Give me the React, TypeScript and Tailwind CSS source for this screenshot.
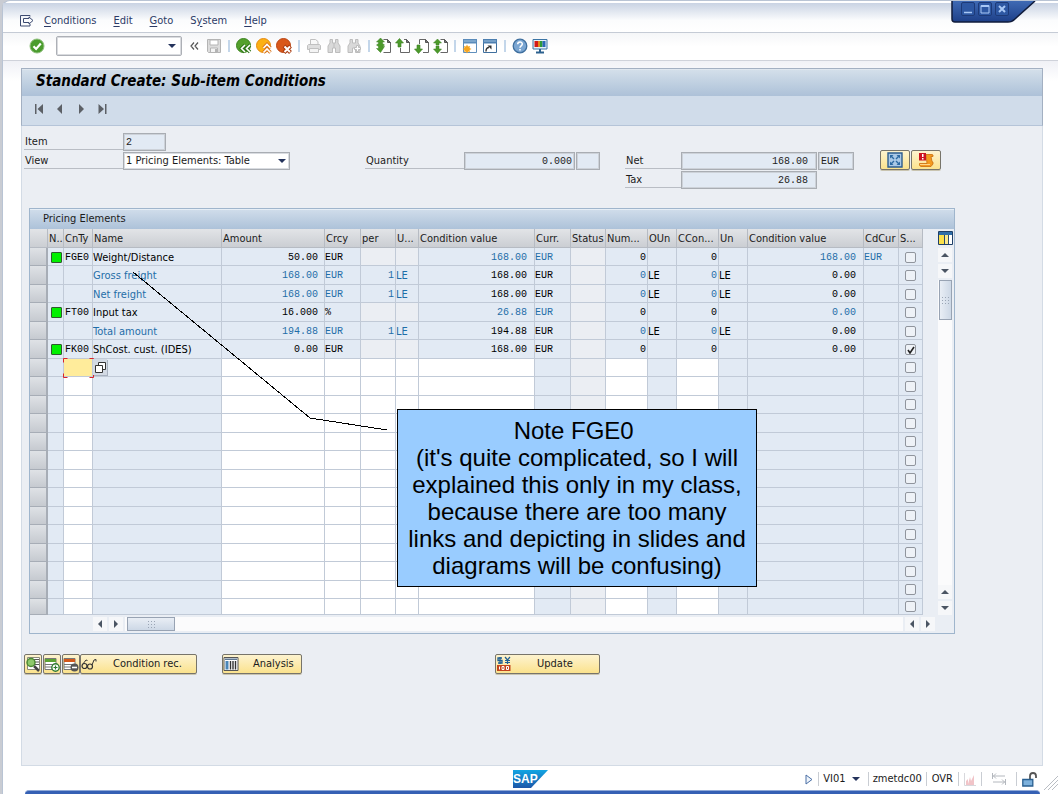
import React from "react";

const UI = "font-['DejaVu_Sans_Condensed','DejaVu_Sans',sans-serif]";
const MONO = "font-['Liberation_Mono',monospace]";

/* ---------- toolbar icons ---------- */

function Svg({ children, size = 16 }: { children: React.ReactNode; size?: number }) {
  return (
    <svg width={size} height={size} viewBox="0 0 16 16" fill="none" aria-hidden="true">
      {children}
    </svg>
  );
}

const PAGE = "M5.5 2.5H12L14.5 5V14.5H5.5";

const icons = {
  enter: (
    <Svg>
      <circle cx="8" cy="8" r="7" fill="#4a9c2d" stroke="#8fbf7c" />
      <path d="M4.5 8.2l2.6 2.7 4.7-5.4" stroke="#fff" strokeWidth="2.2" />
    </Svg>
  ),
  save: (
    <Svg>
      <path d="M1.5 1.5h13v13h-12l-1-1z" fill="#dcdcdc" stroke="#b4b4b4" />
      <path d="M4 2h8v5H4z" fill="#fff" stroke="#b4b4b4" />
      <path d="M4.5 10h7v4.5h-7z" fill="#f4f4f4" stroke="#b4b4b4" />
      <path d="M9 11h2v3H9z" fill="#b4b4b4" />
    </Svg>
  ),
  back: (
    <Svg>
      <circle cx="7.5" cy="7.5" r="7" fill="#54a02c" stroke="#3c8420" />
      <path d="M9 7l-3.500 3.500L9 14M14 7l-3.500 3.500L14 14" stroke="#2f7518" strokeWidth="3.400" />
      <path d="M9 7l-3.500 3.500L9 14M14 7l-3.500 3.500L14 14" stroke="#fff" strokeWidth="1.600" />
    </Svg>
  ),
  exit: (
    <Svg>
      <circle cx="7.5" cy="7.5" r="7" fill="#fbb015" stroke="#e68a10" />
      <path d="M7.500 10L11 6.500l3.500 3.500M7.500 14.500L11 11l3.500 3.500" stroke="#d9741a" strokeWidth="3.400" />
      <path d="M7.500 10L11 6.500l3.500 3.500M7.500 14.500L11 11l3.500 3.500" stroke="#fff" strokeWidth="1.600" />
    </Svg>
  ),
  cancel: (
    <Svg>
      <circle cx="7.5" cy="7.5" r="7" fill="#d9581a" stroke="#b94412" />
      <path d="M8 8l6.500 6.500M14.500 8L8 14.500" stroke="#a93a0e" strokeWidth="4" />
      <path d="M8.500 8.500l5.500 5.500M14 8.500L8.500 14" stroke="#fff" strokeWidth="2" />
    </Svg>
  ),
  print: (
    <Svg>
      <path d="M4.500 6.500v-5h5l2.500 2v3" fill="#f8f8f8" stroke="#c0c0c0" />
      <path d="M1.500 7.500l1-1h11l1 1v4h-13z" fill="#dedede" stroke="#c0c0c0" />
      <path d="M3.500 10.500h9v4h-9z" fill="#f4f4f4" stroke="#c0c0c0" />
    </Svg>
  ),
  find: (
    <Svg>
      <path d="M4 1.500h2.500V5h3V1.500H12V5l2 3v6.500H9.500V10h-3v4.500H2V8l2-3z" fill="#d9d9d9" stroke="#bdbdbd" />
      <path d="M8 5v5" stroke="#bdbdbd" />
    </Svg>
  ),
  findNext: (
    <Svg>
      <path d="M4 1.500h2.500V5h3V1.500H12V5l2 3v6.500H9.500V10h-3v4.500H2V8l2-3z" fill="#d9d9d9" stroke="#bdbdbd" />
      <path d="M10.500 7.500h2v2h2v2h-2v2h-2v-2h-2v-2h2z" fill="#fff" stroke="#bdbdbd" />
    </Svg>
  ),
  first: (
    <Svg>
      <path d="M7.500 1.500h4L14.500 4.500v10h-7" fill="#fff" stroke="#666" />
      <path d="M11.500 1.500v3h3z" fill="#777" stroke="#555" />
      <path d="M4.500 0l4 4H6.500v1.500l2 1.500-2 1.500h2l-4 6-4-4h2V8.500L.5 7l2-1.500V4h-2z" fill="#4c9a2b" stroke="#3a7f20" strokeWidth=".5" />
    </Svg>
  ),
  prev: (
    <Svg>
      <path d="M9 1.500h2.500l3 3v10h-9V10" fill="#fff" stroke="#666" />
      <path d="M11.500 1.500v3h3z" fill="#777" stroke="#555" />
      <path d="M4.500.5l4 4.500H6v4H3V5H.5z" fill="#4c9a2b" stroke="#3a7f20" strokeWidth=".6" />
    </Svg>
  ),
  next: (
    <Svg>
      <path d="M5.500 6V1.500h6l3 3v10H9" fill="#fff" stroke="#666" />
      <path d="M11.500 1.500v3h3z" fill="#777" stroke="#555" />
      <path d="M4.500 15.500l4-4.500H6V7H3v4H.5z" fill="#4c9a2b" stroke="#3a7f20" strokeWidth=".6" />
    </Svg>
  ),
  last: (
    <Svg>
      <path d="M7.500 1.500h4L14.500 4.500v10h-7" fill="#fff" stroke="#666" />
      <path d="M11.500 1.500v3h3z" fill="#777" stroke="#555" />
      <path d="M4.500 1l4 4H6v2H3V5H.5z" fill="#4c9a2b" stroke="#3a7f20" strokeWidth=".5" />
      <path d="M3 8h3v3h2.500l-4 4.500-4-4.500H3z" fill="#4c9a2b" stroke="#3a7f20" strokeWidth=".5" />
    </Svg>
  ),
  newSession: (
    <Svg>
      <path d="M1.500 1.500h13v13h-13z" fill="#fff" stroke="#5f8fbd" />
      <path d="M1 1h14v4.500H1z" fill="#5b8cbb" />
      <path d="M2 3h12" stroke="#9fc1df" />
      <path d="M5 6.500l1 2 2-.5-.5 2 2 1-2 1 .5 2-2-.5-1 2-1-2-2 .5.500-2-2-1 2-1-.5-2 2 .5z" fill="#f7a51c" />
    </Svg>
  ),
  shortcut: (
    <Svg>
      <path d="M1.500 1.500h13v13h-13z" fill="#fff" stroke="#3f6f9e" />
      <path d="M1 1h14v4.500H1z" fill="#4d7fb0" />
      <path d="M2 3h12" stroke="#9fc1df" />
      <path d="M4 13.500c0-3 1-4 3-4" stroke="#333" strokeWidth="1.400" />
      <path d="M5.500 7.500h4v4z" fill="#333" />
    </Svg>
  ),
  help: (
    <Svg>
      <circle cx="8" cy="8" r="6.800" fill="#7ba6d2" stroke="#3f6f9e" strokeWidth="1.300" />
      <path d="M5.700 6.300c0-3 4.600-3 4.600-.2 0 1.800-2.300 1.800-2.300 3.600" stroke="#fff" strokeWidth="1.500" />
      <path d="M7.200 11h1.600v1.600H7.200z" fill="#fff" />
    </Svg>
  ),
  layout: (
    <Svg>
      <path d="M1 1.500h14v9.500H1z" fill="#e8f1f8" stroke="#3b74a5" />
      <path d="M2.500 3H6v6H2.500z" fill="#d41818" />
      <path d="M6 3h2.500v6H6z" fill="#e08a1c" />
      <path d="M8 3h2.500v6H8z" fill="#2d9b3a" />
      <path d="M10.500 3h3v6h-3z" fill="#2b68b8" />
      <path d="M8 11v3M4 14.500h8" stroke="#2d628f" strokeWidth="2" />
    </Svg>
  ),
};

function ToolButton({ label, icon, narrow = false }: { label: string; icon: React.ReactNode; narrow?: boolean }) {
  return (
    <button aria-label={label} className={`flex h-5 items-center justify-center ${narrow ? "w-[19px]" : "w-5"}`}>
      {icon}
    </button>
  );
}

function Sep() {
  return <span className="mx-1 h-3 w-0.5 shrink-0 bg-[#c3d6ea]" />;
}

type Dir = "up" | "down" | "left" | "right";

const ARROWS: Record<Dir, string> = {
  up: "M0 6L4 2l4 4z",
  down: "M0 2h8L4 6z",
  left: "M6 0v8L2 4z",
  right: "M2 0l4 4-4 4z",
};

function Arrow({ dir, className = "fill-[#4b5563]" }: { dir: Dir; className?: string }) {
  return (
    <svg width="8" height="8" viewBox="0 0 8 8" aria-hidden="true" className={className}>
      <path d={ARROWS[dir]} />
    </svg>
  );
}

/* ---------- window chrome ---------- */

function WindowControls() {
  return (
    <div className="absolute top-0 right-[20px] h-6 w-[90px]">
      <svg width="90" height="24" viewBox="0 0 90 24" aria-hidden="true" className="absolute inset-0">
        <defs>
          <linearGradient id="cap" x1="0" y1="0" x2="0" y2="1">
            <stop offset="0" stopColor="#3f6ab4" />
            <stop offset="1" stopColor="#1d3f88" />
          </linearGradient>
        </defs>
        <path d="M4 0v18q0 3 3 3h53q4 0 7-3L87 0z" fill="url(#cap)" />
        <path d="M4 0v18q0 3 3 3h53q4 0 7-3L87 0" fill="none" stroke="#101c3c" strokeWidth="1.500" />
      </svg>
      <div className="absolute top-px left-[13px] flex gap-[3px]">
        {["Minimize", "Maximize", "Close"].map((name, i) => (
          <button
            key={name}
            aria-label={name}
            className="flex h-3.5 w-3.5 items-center justify-center rounded-xs border border-[#1d3a78] bg-[#2d57a2]"
          >
            <svg width="10" height="10" viewBox="0 0 10 10" fill="none" stroke="#a9c8f5" aria-hidden="true">
              {i === 0 && <path d="M1 8.500h8" strokeWidth="1.500" />}
              {i === 1 && <path d="M1 1.500h8v7.500H1zM1 2.500h8" />}
              {i === 2 && <path d="M2 2l6 6M8 2L2 8" strokeWidth="2" />}
            </svg>
          </button>
        ))}
      </div>
    </div>
  );
}

const MENUS = ["Conditions", "Edit", "Goto", "System", "Help"];
const MENU_KEY = [0, 0, 0, 1, 0];

function MenuBar() {
  return (
    <nav className="flex h-[30px] items-center gap-[17px] border-b border-[#c5cbd5] bg-linear-to-b from-[#c9d3e3] via-[#fbfcfd] via-60% to-white pt-[7px] pl-[17px] text-[11px] text-[#2b3a66]">
      <svg width="14" height="12" viewBox="0 0 14 12" fill="none" stroke="#3c4a70" aria-hidden="true" className="-mr-[7px]">
        <path d="M10 1.500V.5H.5v10.500H10V9M3.500 3.500H9V2l4 3.500L9 9V7.500H3.500z" />
      </svg>
      {MENUS.map((m, i) => (
        <button key={m}>
          {m.slice(0, MENU_KEY[i])}
          <span className="underline underline-offset-2">{m[MENU_KEY[i]]}</span>
          {m.slice(MENU_KEY[i] + 1)}
        </button>
      ))}
    </nav>
  );
}

function StandardToolbar() {
  return (
    <div className="flex h-[28px] items-center border-b border-[#cfd2da] bg-linear-to-b from-[#f5f6f8] to-white to-50% pb-px pl-[26px]">
      <button aria-label="Enter" className="mr-[11px]">
        {icons.enter}
      </button>
      <div className="relative mr-0.5 flex w-[126px] items-center">
        <input
          aria-label="Command"
          className="h-5 w-full rounded-xs border border-[#adb0b6] bg-white pr-4 pl-1 text-[11px] shadow-[inset_0_0_0_1px_#d9dbdf]"
        />
        <span className="pointer-events-none absolute right-1.5">
          <Arrow dir="down" className="fill-[#24335c]" />
        </span>
      </div>
      <button aria-label="Hide command field" className="flex w-5 justify-center">
        <svg width="9" height="8" viewBox="0 0 9 8" fill="none" stroke="#555" strokeWidth="1.200" aria-hidden="true">
          <path d="M4 .5L1 4l3 3.500M8 .5L5 4l3 3.500" />
        </svg>
      </button>
      <ToolButton label="Save" icon={icons.save} />
      <Sep />
      <ToolButton label="Back" icon={icons.back} />
      <ToolButton label="Exit" icon={icons.exit} />
      <ToolButton label="Cancel" icon={icons.cancel} />
      <Sep />
      <ToolButton label="Print" icon={icons.print} />
      <ToolButton label="Find" icon={icons.find} />
      <ToolButton label="Find next" icon={icons.findNext} />
      <Sep />
      <ToolButton narrow label="First page" icon={icons.first} />
      <ToolButton narrow label="Previous page" icon={icons.prev} />
      <ToolButton narrow label="Next page" icon={icons.next} />
      <ToolButton narrow label="Last page" icon={icons.last} />
      <Sep />
      <ToolButton label="Create session" icon={icons.newSession} />
      <ToolButton label="Create shortcut" icon={icons.shortcut} />
      <Sep />
      <ToolButton label="Help" icon={icons.help} />
      <ToolButton label="Customize layout" icon={icons.layout} />
    </div>
  );
}

function TitleArea() {
  return (
    <header className="border border-[#a3b0c2] border-b-[#b5c4d8]">
      <h1 className="flex h-[27px] items-center border-t border-white/60 bg-linear-to-b from-[#d3dfea] to-[#adc1d8] pb-1 pl-3.5 text-[15px] leading-5 font-bold text-black italic">
        Standard Create: Sub-item Conditions
      </h1>
      <div className="flex h-[29px] items-center gap-2 bg-[#d0dcea] pb-1 pl-2.5">
        {["First item", "Previous item", "Next item", "Last item"].map((name, i) => (
          <button key={name} aria-label={name} className="flex w-[13px] justify-center">
            <svg width="10" height="10" viewBox="0 0 10 10" fill="#5c6066" aria-hidden="true">
              {i === 0 && <path d="M1 0h1.500v10H1zM9 0v10L3.500 5z" />}
              {i === 1 && <path d="M7 0v10L2 5z" />}
              {i === 2 && <path d="M3 0l5 5-5 5z" />}
              {i === 3 && <path d="M8 0h1.500v10H8zM1.500 0L7 5l-5.500 5z" />}
            </svg>
          </button>
        ))}
      </div>
    </header>
  );
}

/* ---------- header form ---------- */

const FIELD =
  "h-[18px] border border-[#a9adb3] bg-[#e2eaf4] px-0.5 text-[10px] leading-4 text-[#222] shadow-[inset_0_0_0_1px_#cdd2d9]";
const LABEL = "flex h-[17px] items-center border-b border-[#b9bdc4] pt-0.5 pl-px text-[11px]";

const PUSH =
  "flex h-5 items-center rounded-xs border border-[#77746a] bg-linear-to-b from-[#fdf3cf] to-[#fbe28c] shadow-[0_1px_0_#c9c4b0]";

function HeaderForm() {
  return (
    <form className="flex items-start pt-[7px] pl-0.5" onSubmit={(e) => e.preventDefault()}>
      <div className="mr-[75px] flex w-[266px] flex-col gap-px">
        <div className="flex items-start">
          <label htmlFor="item" className={`${LABEL} w-[99px]`}>
            Item
          </label>
          <input id="item" readOnly value="2" className={`${FIELD} ${MONO} w-[43px]`} />
        </div>
        <div className="relative flex items-start">
          <label htmlFor="view" className={`${LABEL} w-[99px]`}>
            View
          </label>
          <select
            id="view"
            className="h-[18px] flex-1 appearance-none border border-[#a9adb3] bg-white px-0.5 text-[11px] leading-4 shadow-[inset_0_0_0_1px_#d9dce1]"
          >
            <option>1 Pricing Elements: Table</option>
          </select>
          <span className="pointer-events-none absolute top-[5px] right-[4px]">
            <Arrow dir="down" className="fill-[#24335c]" />
          </span>
        </div>
      </div>
      <div className="mr-[25px] flex w-[235px] items-start pt-[19px]">
        <label htmlFor="qty" className={`${LABEL} w-[99px]`}>
          Quantity
        </label>
        <input id="qty" readOnly value="0.000" className={`${FIELD} ${MONO} mr-px w-[111px] text-right`} />
        <input aria-label="Quantity unit" readOnly value="" className={`${FIELD} w-6`} />
      </div>
      <div className="mr-[26px] flex w-[229px] flex-col gap-px pt-[19px]">
        <div className="flex items-start">
          <label htmlFor="net" className={`${LABEL} w-14`}>
            Net
          </label>
          <input id="net" readOnly value="168.00" className={`${FIELD} ${MONO} mr-px w-[136px] pr-2 text-right`} />
          <input aria-label="Currency" readOnly value="EUR" className={`${FIELD} ${MONO} w-9`} />
        </div>
        <div className="flex items-start">
          <label htmlFor="tax" className={`${LABEL} w-14`}>
            Tax
          </label>
          <input id="tax" readOnly value="26.88" className={`${FIELD} ${MONO} w-[136px] pr-2 text-right`} />
        </div>
      </div>
      <div className="flex gap-px pt-[17px]">
        <button aria-label="Expand all" className={`${PUSH} w-[30px] justify-center`}>
          <Svg>
            <path d="M1 1h14v14H1z" fill="#a9c8e6" stroke="#2d5c8e" strokeWidth="1.400" />
            <path d="M3 6.500V3h3.500zM9.500 3H13v3.500zM13 9.500V13H9.500zM6.500 13H3V9.500z" fill="#2d6aa3" />
            <path d="M4 4l3 3M12 4L9 7M12 12L9 9M4 12l3-3" stroke="#2d6aa3" strokeWidth="1.400" />
          </Svg>
        </button>
        <button aria-label="Incompletion log" className={`${PUSH} w-[30px] justify-center`}>
          <Svg>
            <path
              d="M8 2.500h6q1.500 0 1 2h-2l1 5q1.500 0 1 2.500l-2 2.500H3q-2-.5-1.500-3H9z"
              fill="#f39a1e"
              stroke="#c96c0c"
              strokeWidth=".8"
            />
            <path d="M2 12.500h10" stroke="#ffd58a" />
            <path d="M1 1h7v7.500H1z" fill="#cc1420" />
            <path d="M4 2h1.500v3H4zM4 6h1.500v1.500H4z" fill="#fff" />
          </Svg>
        </button>
      </div>
    </form>
  );
}

/* ---------- pricing table ---------- */

type Kind = "text" | "num" | "code";
type Column = { head: string; width: string; kind: Kind; pad: string; empty: string };

const BLUE = "bg-[#e2eaf4]";
const GRAY = "bg-[#ebeef3]";
const WHITE = "bg-white";

const COLUMNS: Column[] = [
  { head: "N..", width: "w-4", kind: "text", pad: "pl-[3px]", empty: BLUE },
  { head: "CnTy", width: "w-[29px]", kind: "code", pad: "pl-px", empty: WHITE },
  { head: "Name", width: "w-[129px]", kind: "text", pad: "", empty: BLUE },
  { head: "Amount", width: "w-[103px]", kind: "num", pad: "pr-[6px]", empty: WHITE },
  { head: "Crcy", width: "w-9", kind: "code", pad: "", empty: WHITE },
  { head: "per", width: "w-[35px]", kind: "num", pad: "pr-px", empty: WHITE },
  { head: "U...", width: "w-[23px]", kind: "text", pad: "", empty: WHITE },
  { head: "Condition value", width: "w-[116px]", kind: "num", pad: "pr-[7px]", empty: WHITE },
  { head: "Curr.", width: "w-9", kind: "code", pad: "", empty: BLUE },
  { head: "Status", width: "w-[35px]", kind: "text", pad: "", empty: GRAY },
  { head: "Num...", width: "w-[42px]", kind: "num", pad: "pr-px", empty: WHITE },
  { head: "OUn", width: "w-[29px]", kind: "text", pad: "", empty: BLUE },
  { head: "CCon...", width: "w-[42px]", kind: "num", pad: "pr-px", empty: WHITE },
  { head: "Un", width: "w-[29px]", kind: "text", pad: "", empty: BLUE },
  { head: "Condition value", width: "w-[116px]", kind: "num", pad: "pr-[7px]", empty: BLUE },
  { head: "CdCur", width: "w-[35px]", kind: "code", pad: "", empty: BLUE },
  { head: "S...", width: "w-6", kind: "text", pad: "", empty: BLUE },
];

/* A leading "*" marks a calculated value, shown in blue. */
const ROWS: string[][] = [
  ["", "FGE0", "Weight/Distance", "50.00", "EUR", "", "", "*168.00", "*EUR", "", "0", "", "0", "", "*168.00", "*EUR"],
  ["", "", "*Gross freight", "*168.00", "*EUR", "*1", "*LE", "168.00", "EUR", "", "*0", "LE", "*0", "LE", "0.00", ""],
  ["", "", "*Net freight", "*168.00", "*EUR", "*1", "*LE", "168.00", "EUR", "", "*0", "LE", "*0", "LE", "0.00", ""],
  ["", "FT00", "Input tax", "16.000", "%", "", "", "*26.88", "*EUR", "", "0", "", "0", "", "*0.00", ""],
  ["", "", "*Total amount", "*194.88", "*EUR", "*1", "*LE", "194.88", "EUR", "", "*0", "LE", "*0", "LE", "0.00", ""],
  ["", "FK00", "ShCost. cust. (IDES)", "0.00", "EUR", "", "", "168.00", "EUR", "", "0", "", "0", "", "0.00", ""],
];
const ROW_COUNT = 20;
const ACTIVE_ROW = 6;

const GRID = "border-r border-b border-[#c1cad7]";
const HEAD = "border-r border-b border-[#b6bbc3] bg-linear-to-b from-[#e2e4e7] to-[#cbced3]";

function Check({ row }: { row: number }) {
  return (
    <span className="relative flex justify-center">
      <input
        type="checkbox"
        aria-label={`Statistical, row ${row + 1}`}
        defaultChecked={row === 5}
        className="peer h-[11px] w-[11px] appearance-none rounded-xs border border-[#90959d] bg-[#eef2f7]"
      />
      <svg
        viewBox="0 0 8 8"
        fill="none"
        stroke="#222"
        strokeWidth="1.600"
        aria-hidden="true"
        className="pointer-events-none invisible absolute top-0.5 h-2 w-2 peer-checked:visible"
      >
        <path d="M1 4l2 3 4-6" />
      </svg>
    </span>
  );
}

function ActiveCell() {
  return (
    <td className={`relative p-0 ${GRID} bg-[#ffec9b]`}>
      <input aria-label="Condition type" className={`block h-4 w-full bg-transparent text-[10px] outline-none ${MONO}`} />
      <svg
        width="31"
        height="20"
        viewBox="0 0 31 20"
        fill="none"
        stroke="#d8232a"
        aria-hidden="true"
        className="pointer-events-none absolute -top-px -left-px"
      >
        <path d="M.5 4.500v-4h4M26.500.5h4v4M30.500 15.500v4h-4M4.500 19.500h-4v-4" />
      </svg>
      <button
        aria-label="Value help"
        className="absolute top-0 left-[29px] z-10 flex h-4 w-3.5 items-center justify-center bg-[#d3dae4] shadow-[1px_1px_0_#a9b2bf]"
      >
        <svg width="11" height="11" viewBox="0 0 11 11" fill="#fff" stroke="#333" aria-hidden="true">
          <path d="M3.500.5h7v7h-7z" />
          <path d="M.5 3.500h7v7h-7z" />
        </svg>
      </button>
    </td>
  );
}

function PricingTable() {
  return (
    <table className="w-[893px] shrink-0 table-fixed border-separate border-spacing-0">
      <thead>
        <tr className="h-[19px]">
          <th aria-label="Select all" className={`w-[18px] p-0 ${HEAD}`} />
          {COLUMNS.map((c, i) => (
            <th
              key={i}
              scope="col"
              className={`${c.width} overflow-hidden p-0 pt-0.5 pl-px text-left text-[11px] leading-4 font-normal whitespace-nowrap ${HEAD}`}
            >
              {c.head}
            </th>
          ))}
        </tr>
      </thead>
      <tbody>
        {Array.from({ length: ROW_COUNT }, (_, r) => {
          const row = ROWS[r];
          const height = r === ROW_COUNT - 1 ? "h-4" : r % 2 ? "h-[19px]" : "h-[18px]";
          return (
            <tr key={r} className={height}>
              <td className="border-r-2 border-b border-[#a7adb6] bg-linear-to-b from-[#dfe2e6] to-[#c6cad0] p-0" />
              {COLUMNS.map((c, i) => {
                if (i === 1 && r === ACTIVE_ROW) return <ActiveCell key={i} />;
                const raw = row?.[i] ?? "";
                const calc = raw.startsWith("*");
                const text = calc ? raw.slice(1) : raw;
                const unused = i === 9 || ((i === 5 || i === 6) && !text);
                const bg = row ? (unused ? GRAY : BLUE) : c.empty;
                return (
                  <td
                    key={i}
                    className={`p-0 whitespace-nowrap leading-[15px] ${row ? "pt-px" : ""} ${GRID} ${bg} ${c.pad} ${
                      c.kind === "text" ? "text-[11px]" : `text-[10px] ${MONO}`
                    } ${c.kind === "num" ? "text-right" : ""} ${calc ? "text-[#1f6ea8]" : "text-black"}`}
                  >
                    {i === 0 && row?.[1] ? (
                      <span className="block h-[11px] w-[11px] rounded-[1px] border border-[#2f5a2f] bg-[#00f000]" />
                    ) : i === 16 ? (
                      <Check row={r} />
                    ) : (
                      text
                    )}
                  </td>
                );
              })}
            </tr>
          );
        })}
      </tbody>
    </table>
  );
}

function ScrollButton({ dir }: { dir: Dir }) {
  return (
    <button aria-label={`Scroll ${dir}`} className="flex h-3.5 w-3.5 shrink-0 items-center justify-center bg-[#f6f7f9]">
      <Arrow dir={dir} />
    </button>
  );
}

function Grip() {
  return (
    <svg width="8" height="8" viewBox="0 0 8 8" stroke="#9aa5b5" strokeDasharray="1 2" aria-hidden="true">
      <path d="M1 1.500h7M1 4.500h7M1 7.500h7" />
    </svg>
  );
}

function PricingPanel() {
  return (
    <section className="mt-[19px] ml-[7px] w-[926px] border border-[#9fb5cc] bg-[#eaeef4]">
      <h2 className="flex h-5 items-center border-t border-[#e6eef6] bg-linear-to-b from-[#cfdcea] to-[#adc2d9] pl-[13px] text-[11px]">
        Pricing Elements
      </h2>
      <div className="flex">
        <PricingTable />
        <div className="ml-[15px] flex w-3.5 flex-col items-center">
          <button aria-label="Configure table" className="mt-0.5 mb-[3px]">
            <svg width="15" height="14" viewBox="0 0 15 14" aria-hidden="true">
              <path d="M.5.5h14v13H.5z" fill="#fff" stroke="#1f3f66" />
              <path d="M1 1h13v3H1z" fill="#2f6ea8" />
              <path d="M1 4h5v9H1z" fill="#fbe04a" />
              <path d="M6.500 4v9" stroke="#2a4a70" />
              <path d="M7 4h3v9H7z" fill="#fbe98a" />
              <path d="M10.500 4v9" stroke="#2a4a70" />
            </svg>
          </button>
          <ScrollButton dir="up" />
          <div className="h-0.5" />
          <ScrollButton dir="down" />
          <div className="mt-0.5 flex w-3.5 flex-1 flex-col items-center bg-[#fbfbfc]">
            <div className="flex h-10 w-[13px] items-center justify-center border border-[#98a3b3] bg-linear-to-r from-[#e9eef5] to-[#cdd8e6]">
              <Grip />
            </div>
          </div>
          <ScrollButton dir="up" />
          <div className="h-0.5" />
          <ScrollButton dir="down" />
        </div>
      </div>
      <div className="flex h-[18px] items-center gap-0.5 pr-[19px] pl-[63px]">
        <ScrollButton dir="left" />
        <ScrollButton dir="right" />
        <div className="flex h-3.5 flex-1 items-center bg-[#fbfbfc] pl-0.5">
          <div className="flex h-3.5 w-12 items-center justify-center border border-[#98a3b3] bg-linear-to-b from-[#e9eef5] to-[#cdd8e6]">
            <Grip />
          </div>
        </div>
        <ScrollButton dir="left" />
        <ScrollButton dir="right" />
      </div>
    </section>
  );
}

/* ---------- footer actions ---------- */

function Actions() {
  return (
    <div className="mt-5 flex items-center pl-0.5 text-[11px]">
      <button aria-label="Details" className={`${PUSH} mr-px w-[18px] justify-center`}>
        <Svg>
          <path d="M2.500 1.500h12v12h-12z" fill="#fff" stroke="#8a8a7a" />
          <path d="M9 3.500h5M9 6h5M9 8.500h5" stroke="#555" />
          <circle cx="6" cy="6.500" r="4" fill="#8ec96c" stroke="#4c8a34" strokeWidth="1.500" />
          <path d="M9 10l5 5" stroke="#444" strokeWidth="2.500" />
        </Svg>
      </button>
      <button aria-label="Insert row" className={`${PUSH} mr-px w-[18px] justify-center`}>
        <Svg>
          <path d="M1 2.500h11v11H1z" fill="#fff" stroke="#777" />
          <path d="M1 3h11v3H1z" fill="#5ba233" />
          <path d="M1 8.500h11M1 11h11" stroke="#777" />
          <circle cx="11.500" cy="11.500" r="3.700" fill="#fff" stroke="#2f7a2f" strokeWidth="1.400" />
          <path d="M11.500 9.500v4M9.500 11.500h4" stroke="#2f7a2f" strokeWidth="1.200" />
        </Svg>
      </button>
      <button aria-label="Delete row" className={`${PUSH} w-[18px] justify-center`}>
        <Svg>
          <path d="M1 2.500h11v11H1z" fill="#fff" stroke="#777" />
          <path d="M1 3h11v3H1z" fill="#d3581c" />
          <path d="M1 8.500h11M1 11h11" stroke="#777" />
          <circle cx="11.500" cy="11.500" r="4" fill="#555" />
          <path d="M9 11.500h5" stroke="#fff" strokeWidth="1.600" />
        </Svg>
      </button>
      <button className={`${PUSH} mr-[25px] w-[117px] gap-4`}>
        <Svg>
          <circle cx="3.500" cy="10" r="2.500" stroke="#333" strokeWidth="1.200" />
          <circle cx="9" cy="10.500" r="2.500" stroke="#333" strokeWidth="1.200" />
          <path d="M1.500 8.500L5 4l1.500.5M11 9l2-5 2-.5v2" stroke="#333" />
        </Svg>
        Condition rec.
      </button>
      <button className={`${PUSH} mr-[193px] w-20 gap-3.5`}>
        <Svg>
          <path d="M1 1.500h14v13H1z" fill="#fff" stroke="#555" />
          <path d="M2 2.500h12v1.500H2z" fill="#5f7892" />
          <path d="M2.500 5h3v8.500h-3z" fill="#4a86b8" />
          <path d="M7.500 5v8.500M10 5v8.500M12.500 5v8.500" stroke="#333" strokeWidth="1.400" />
        </Svg>
        Analysis
      </button>
      <button className={`${PUSH} w-[105px] gap-[25px]`}>
        <Svg>
          <path d="M6 2H2v2.500h4V7H2M4 1v7" stroke="#1f5f94" strokeWidth="1.300" />
          <path d="M9 1l2.500 3L14 1M11.500 4v4M9 4.500h5M9 6.500h5" stroke="#1f5f94" strokeWidth="1.200" />
          <path d="M1 9h13.500v6H1z" fill="#c3441c" />
          <path d="M3.500 10.500v3M6 10.500h2v3H6zM10.500 10.500h2v3h-2z" stroke="#fff" />
        </Svg>
        Update
      </button>
    </div>
  );
}

/* ---------- annotation ---------- */

function Callout() {
  return (
    <>
      <svg
        width="260"
        height="170"
        viewBox="0 0 260 170"
        fill="none"
        stroke="#000"
        shapeRendering="crispEdges"
        aria-hidden="true"
        className="pointer-events-none absolute top-[145px] left-[110px]"
      >
        <path d="M1 1l177 146 77 12" />
      </svg>
      <aside className="absolute top-[283px] left-[375px] h-[178px] w-[360px] border border-black bg-[#99ccff] pt-[7px] text-center font-['Liberation_Sans',sans-serif] text-[24px] leading-[27px] text-black">
        Note FGE0&nbsp;
        <br />
        (it's quite complicated, so I will
        <br />
        explained this only in my class,
        <br />
        because there are too many
        <br />
        links and depicting in slides and
        <br />
        diagrams will be confusing)
      </aside>
    </>
  );
}

/* ---------- status bar ---------- */

function Bar() {
  return <span className="h-3.5 w-px bg-[#c9cdd3]" />;
}

function StatusBar() {
  return (
    <footer className="relative flex h-6 items-center justify-end pt-0.5 pr-[21px] text-[11px]">
      <svg width="36" height="18" viewBox="0 0 36 18" role="img" aria-label="SAP" className="absolute top-1 left-[510px]">
        <defs>
          <linearGradient id="sap" x1="0" y1="0" x2="0" y2="1">
            <stop offset="0" stopColor="#12a5e3" />
            <stop offset="1" stopColor="#1c56a8" />
          </linearGradient>
        </defs>
        <path d="M0 0h35L18 18H0z" fill="url(#sap)" />
        <text x="0" y="13" fill="#fff" fontFamily="Liberation Sans" fontWeight="bold" fontSize="12">
          SAP
        </text>
      </svg>
      <button aria-label="Show messages" className="mr-[5px]">
        <svg width="8" height="11" viewBox="0 0 8 11" fill="#eef4fb" stroke="#4a6fa5" aria-hidden="true">
          <path d="M1 1l6 4.500L1 10z" />
        </svg>
      </button>
      <Bar />
      <button className="mr-2 ml-1 flex items-center gap-1.5">
        VI01
        <Arrow dir="down" className="fill-[#24335c]" />
      </button>
      <Bar />
      <span className="mx-1">zmetdc00</span>
      <Bar />
      <span className="mx-[5px]">OVR</span>
      <Bar />
      <svg width="14" height="13" viewBox="0 0 14 13" fill="none" aria-hidden="true" className="mx-1">
        <path d="M1.500 0v12.500H13" stroke="#d8d8dc" />
        <path d="M3 8l2-2v5l2-7 1 4 3-6v10H3z" fill="#f1c4c8" />
      </svg>
      <Bar />
      <svg width="16" height="12" viewBox="0 0 16 12" fill="none" stroke="#b4b8be" aria-hidden="true" className="mx-[9px]">
        <path d="M1.500 0v6M2 3h12M5 .5L2.500 3 5 5.500M14.500 6v6M2 9h12M11 6.500L13.500 9 11 11.500" />
      </svg>
      <Bar />
      <svg width="15" height="15" viewBox="0 0 15 15" aria-hidden="true" className="ml-[5px]">
        <path d="M8 7V4q0-3 3-3t3 3v2" fill="none" stroke="#555" strokeWidth="1.800" />
        <path d="M.8 7.500h10v6.500H.8z" fill="#7db1dc" stroke="#2a5f90" strokeWidth="1.300" />
      </svg>
      <svg width="14" height="16" viewBox="0 0 14 16" stroke="#b9bdc3" aria-hidden="true" className="absolute right-0 bottom-0">
        <path d="M0 16L14 2M4 16L14 6M8 16l6-6" />
      </svg>
    </footer>
  );
}

export default function App() {
  return (
    <div className={`flex min-h-screen flex-col bg-[#c9ccd3] pl-0.5 text-[11px] text-[#1b1b1b] ${UI}`}>
      <div className="relative flex flex-1 flex-col rounded-tl-lg border-t border-l border-[#b9c4d4] bg-white pt-0.5">
        <WindowControls />
        <MenuBar />
        <StandardToolbar />
        <div className="flex flex-1 flex-col bg-linear-to-b from-[#f0f1f6] to-white to-[20px] pt-[7px] pr-[15px] pl-[18px]">
          <TitleArea />
          <main className="relative flex-1 border border-t-0 border-[#d3dbe5] bg-[#ebeef3]">
            <HeaderForm />
            <PricingPanel />
            <Actions />
            <Callout />
          </main>
        </div>
        <StatusBar />
        <div className="mr-[18px] ml-[22px] h-1 rounded-t-xl border-t border-[#8fa9d8] bg-[#3560b4]" />
      </div>
    </div>
  );
}
